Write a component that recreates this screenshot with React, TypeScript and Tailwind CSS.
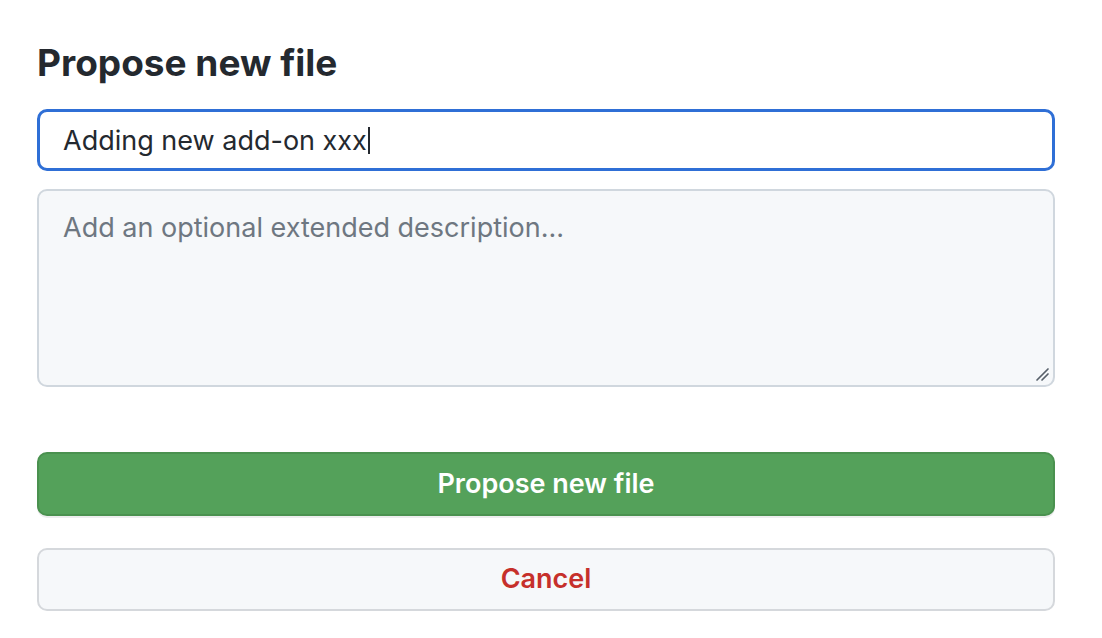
import React from 'react';

export default function App() {
  return (
    <div className="min-h-screen bg-white font-['Inter','Liberation_Sans',sans-serif] text-[#24292f]">
      <div className="w-[1018px] ml-[37px] pt-[40px]">
        <h2 className="text-[37px] font-bold leading-[46px]">Propose new file</h2>

        <div className="mt-[23px] h-[62px] rounded-[10px] border-[3px] border-[#2f6fd6] bg-white flex items-center pl-[23px]">
          <span className="text-[27px] leading-none">Adding new add-on xxx</span>
          <span className="ml-[1px] w-[2px] h-[27px] bg-[#24292f]" />
        </div>

        <div className="relative mt-[18px] h-[198px] rounded-[10px] border-2 border-[#d0d7de] bg-[#f6f8fa]">
          <textarea
            readOnly
            placeholder="Add an optional extended description..."
            className="w-full h-full resize-none bg-transparent outline-none pl-[24px] pt-[19px] text-[27px] leading-[36px] placeholder:text-[#6e7781]"
          />
          <svg className="absolute right-[3px] bottom-[3px]" width="16" height="16" viewBox="0 0 16 16">
            <path d="M3 14 L14 3 M8 14 L14 8" stroke="#57606a" strokeWidth="1.7" strokeLinecap="round" />
          </svg>
        </div>

        <div className="mt-[65px] flex flex-col gap-[32px]">
          <button className="h-[64px] rounded-[10px] border-2 border-[#4a914f] bg-[#54a15a] text-white text-[27px] font-semibold shadow-[0_2px_0_rgba(27,31,36,0.08)]">
            Propose new file
          </button>
          <button className="h-[63px] rounded-[10px] border-2 border-[#d5d8dc] bg-[#f6f8fa] text-[#c6302b] text-[27px] font-semibold">
            Cancel
          </button>
        </div>
      </div>
    </div>
  );
}
